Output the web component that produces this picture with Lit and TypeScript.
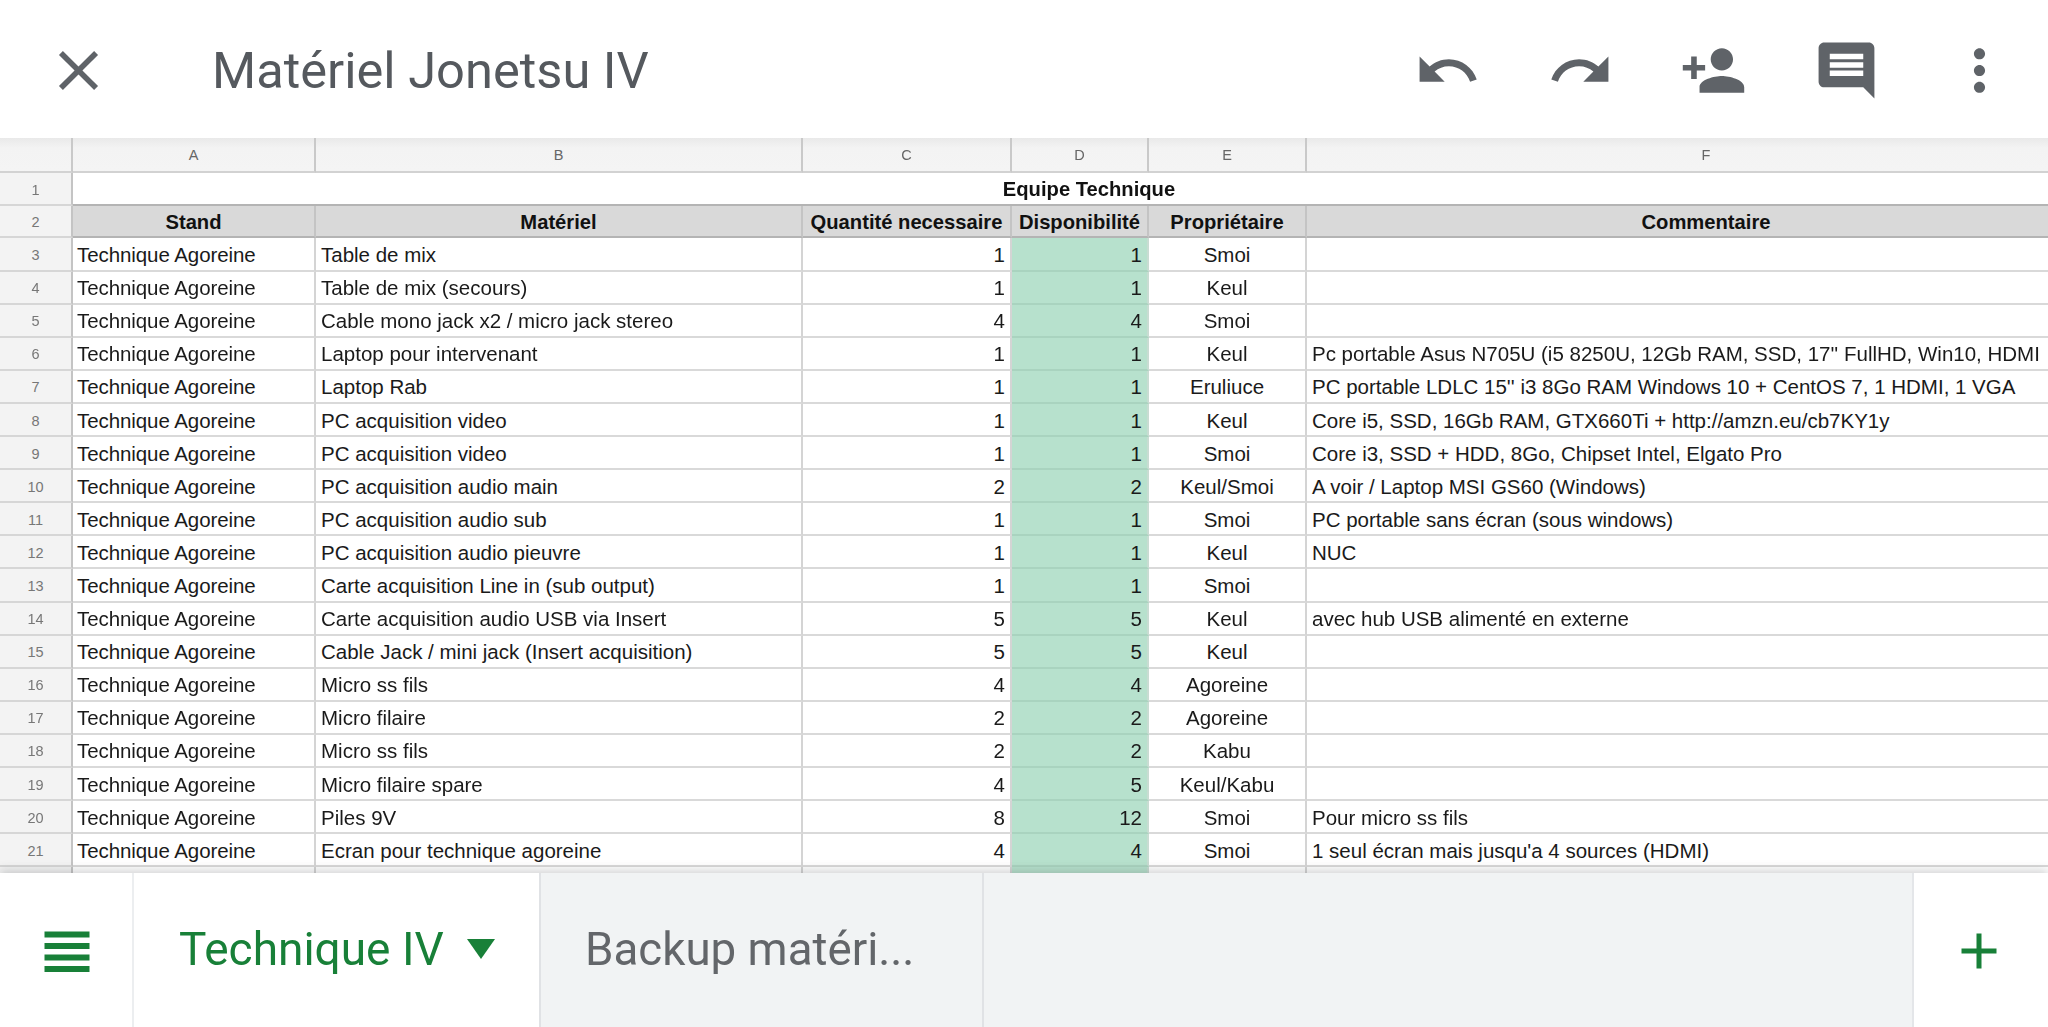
import { LitElement, html, css, svg } from "lit";
import { customElement } from "lit/decorators.js";

const P = {
  close: "M19 6.41L17.59 5 12 10.59 6.41 5 5 6.41 10.59 12 5 17.59 6.41 19 12 13.41 17.59 19 19 17.59 13.41 12z",
  undo: "M12.5 8c-2.65 0-5.05.99-6.9 2.6L2 7v9h9l-3.62-3.62c1.39-1.16 3.16-1.88 5.12-1.88 3.54 0 6.55 2.31 7.6 5.5l2.37-.78C21.08 11.03 17.15 8 12.5 8z",
  redo: "M18.4 10.6C16.55 8.99 14.15 8 11.5 8c-4.65 0-8.58 3.03-9.96 7.22L3.9 16c1.05-3.19 4.05-5.5 7.6-5.5 1.95 0 3.73.72 5.12 1.88L13 16h9V7l-3.6 3.6z",
  person: "M15 12c2.21 0 4-1.79 4-4s-1.79-4-4-4-4 1.79-4 4 1.79 4 4 4zm-9-2V7H4v3H1v2h3v3h2v-3h3v-2H6zm9 4c-2.67 0-8 1.34-8 4v2h16v-2c0-2.66-5.33-4-8-4z",
  comment: "M21.99 4c0-1.1-.89-2-1.99-2H4c-1.1 0-2 .9-2 2v12c0 1.1.9 2 2 2h14l4 4-.01-18zM18 14H6v-2h12v2zm0-3H6V9h12v2zm0-3H6V6h12v2z",
  more: "M12 8c1.1 0 2-.9 2-2s-.9-2-2-2-2 .9-2 2 .9 2 2 2zm0 2c-1.1 0-2 .9-2 2s.9 2 2 2 2-.9 2-2-.9-2-2-2zm0 6c-1.1 0-2 .9-2 2s.9 2 2 2 2-.9 2-2-.9-2-2-2z",
  menu: "M3 5h18v2.4H3zM3 9.6h18v2.4H3zM3 14.2h18v2.4H3zM3 18.8h18v2.4H3z",
  plus: "M19 13h-6v6h-2v-6H5v-2h6V5h2v6h6v2z",
};
const icon = (d: string, cls = "icon") =>
  html`<svg class=${cls} viewBox="0 0 24 24">${svg`<path d=${d}></path>`}</svg>`;

const T = "Technique Agoreine";
const rows: [string, string, number, number, string, string][] = [
  [T, "Table de mix", 1, 1, "Smoi", ""],
  [T, "Table de mix (secours)", 1, 1, "Keul", ""],
  [T, "Cable mono jack x2 / micro jack stereo", 4, 4, "Smoi", ""],
  [T, "Laptop pour intervenant", 1, 1, "Keul", "Pc portable Asus N705U (i5 8250U, 12Gb RAM, SSD, 17'' FullHD, Win10, HDMI"],
  [T, "Laptop Rab", 1, 1, "Eruliuce", "PC portable LDLC 15'' i3 8Go RAM Windows 10 + CentOS 7, 1 HDMI, 1 VGA"],
  [T, "PC acquisition video", 1, 1, "Keul", "Core i5, SSD, 16Gb RAM, GTX660Ti + http://amzn.eu/cb7KY1y"],
  [T, "PC acquisition video", 1, 1, "Smoi", "Core i3, SSD + HDD, 8Go, Chipset Intel, Elgato Pro"],
  [T, "PC acquisition audio main", 2, 2, "Keul/Smoi", "A voir / Laptop MSI GS60 (Windows)"],
  [T, "PC acquisition audio sub", 1, 1, "Smoi", "PC portable sans écran (sous windows)"],
  [T, "PC acquisition audio pieuvre", 1, 1, "Keul", "NUC"],
  [T, "Carte acquisition Line in (sub output)", 1, 1, "Smoi", ""],
  [T, "Carte acquisition audio USB via Insert", 5, 5, "Keul", "avec hub USB alimenté en externe"],
  [T, "Cable Jack / mini jack (Insert acquisition)", 5, 5, "Keul", ""],
  [T, "Micro ss fils", 4, 4, "Agoreine", ""],
  [T, "Micro filaire", 2, 2, "Agoreine", ""],
  [T, "Micro ss fils", 2, 2, "Kabu", ""],
  [T, "Micro filaire spare", 4, 5, "Keul/Kabu", ""],
  [T, "Piles 9V", 8, 12, "Smoi", "Pour micro ss fils"],
  [T, "Ecran pour technique agoreine", 4, 4, "Smoi", "1 seul écran mais jusqu'a 4 sources (HDMI)"],
];

@customElement("app-root")
export class AppRoot extends LitElement {
  static styles = css`
    :host { display: block; width: 2048px; height: 1027px; background: #fff; overflow: hidden; }
    .page { display: flex; flex-direction: column; height: 1027px; }
    .top { height: 138px; flex: none; display: flex; align-items: center; padding-right: 2px; box-sizing: border-box; }
    .closeBtn { width: 157px; height: 138px; flex: none; display: flex; align-items: center; justify-content: center; padding-top: 3px; box-sizing: border-box; }
    .title { flex: 1; margin-left: 55px; padding-top: 2px; font: 400 50.6px Roboto, sans-serif; color: #55595e; white-space: nowrap; }
    .btn { width: 133px; height: 138px; flex: none; display: flex; align-items: center; justify-content: center; padding-top: 2px; box-sizing: border-box; }
    .icon { width: 67px; height: 67px; fill: #5f6368; display: block; filter: blur(.5px); }
    .sheetWrap { height: 735px; flex: none; overflow: hidden; padding-right: 2px; box-sizing: border-box; }
    .sheet {
      display: grid; width: 2107px;
      grid-template-columns: 73px 243px 487px 209px 137px 158px 800px;
      grid-template-rows: 35px 33.1px 32.4px repeat(20, 33.1px);
      font: 400 20.5px "Liberation Sans", Arial, sans-serif; color: #1a1a1a;
      filter: blur(.55px);
    }
    .c {
      box-sizing: border-box; border-right: 2px solid #d4d4d4; border-bottom: 2px solid #d9d9d9;
      white-space: nowrap; overflow: hidden; padding: 2px 5px 0; display: flex; align-items: center; background: #fff;
      min-width: 0;
    }
    .a { padding-left: 4px; letter-spacing: -.08px; }
    .hd { background: linear-gradient(#e9e9e9, #f3f3f3 30%, #f4f4f4); border-right-color: #c9c9c9; border-bottom-color: #d2d2d2; color: #666; font-size: 14.5px; justify-content: center; padding-top: 0; }
    .rn { background: #f3f3f3; border-right-color: #c4c4c4; border-bottom-color: #d6d6d6; color: #777; font-size: 14.5px; justify-content: center; }
    .merged { grid-column: 2 / 8; font-weight: 700; font-size: 20.2px; justify-content: center; color: #111; border-bottom-color: #b4b4b4; }
    .head { background: #d9d9d9; font-weight: 700; font-size: 20.2px; color: #111; justify-content: center; padding: 2px 0 0; border-bottom-color: #b4b4b4; border-right-color: #c4c4c4; }
    .num { justify-content: flex-end; }
    .ctr { justify-content: center; }
    .green { background: #b7e1cd; border-right-color: #c8dcd2; border-bottom-color: #a9d3bf; }
    .bottom { flex: 1; display: flex; background: #f1f3f4; box-shadow: 0 -3px 9px rgba(60,64,67,.22); position: relative; }
    .menuBtn { width: 134px; flex: none; background: #fff; border-right: 2px solid #eceef0; box-sizing: border-box; display: flex; align-items: center; justify-content: center; padding-left: 2px; padding-bottom: 3px; }
    .menuIcon { width: 60px; height: 60px; fill: #188038; display: block; filter: blur(.5px); }
    .add .menuIcon { margin-top: 1px; }
    .tab { display: flex; align-items: center; box-sizing: border-box; border-right: 2px solid #e0e2e5; font: 400 46px Roboto, sans-serif; white-space: nowrap; padding-bottom: 2px; }
    .tab1 { width: 407px; background: #fff; color: #188038; padding-left: 45px; }
    .tab2 { width: 443px; color: #63666a; padding-left: 44px; font-size: 45.7px; }
    .tab span { filter: blur(.4px); }
    .tri { width: 0; height: 0; margin-left: 23px; border-left: 14.5px solid transparent; border-right: 14.5px solid transparent; border-top: 20px solid #188038; }
    .spacer { flex: 1; }
    .add { width: 136px; flex: none; background: #fff; border-left: 2px solid #e4e6e9; box-sizing: border-box; display: flex; align-items: center; justify-content: center; padding-right: 5px; padding-top: 0; }
  `;

  render() {
    return html`<div class="page">
      <div class="top">
        <div class="closeBtn">${icon(P.close)}</div>
        <div class="title">Matériel Jonetsu IV</div>
        ${[P.undo, P.redo, P.person, P.comment, P.more].map((d) => html`<div class="btn">${icon(d)}</div>`)}
      </div>
      <div class="sheetWrap">
        <div class="sheet">
          <div class="c hd"></div>
          ${"ABCDEF".split("").map((l) => html`<div class="c hd">${l}</div>`)}
          <div class="c rn">1</div>
          <div class="c merged">Equipe Technique</div>
          <div class="c rn">2</div>
          ${["Stand", "Matériel", "Quantité necessaire", "Disponibilité", "Propriétaire", "Commentaire"].map(
            (t) => html`<div class="c head">${t}</div>`
          )}
          ${rows.map(
            (r, i) => html`<div class="c rn">${i + 3}</div>
              <div class="c a">${r[0]}</div>
              <div class="c">${r[1]}</div>
              <div class="c num">${r[2]}</div>
              <div class="c num green">${r[3]}</div>
              <div class="c ctr">${r[4]}</div>
              <div class="c">${r[5]}</div>`
          )}
          <div class="c rn"></div><div class="c"></div><div class="c"></div><div class="c"></div>
          <div class="c green"></div><div class="c"></div><div class="c"></div>
        </div>
      </div>
      <div class="bottom">
        <div class="menuBtn">${icon(P.menu, "menuIcon")}</div>
        <div class="tab tab1"><span>Technique IV</span><div class="tri"></div></div>
        <div class="tab tab2"><span>Backup matéri...</span></div>
        <div class="spacer"></div>
        <div class="add">${icon(P.plus, "menuIcon")}</div>
      </div>
    </div>`;
  }
}
